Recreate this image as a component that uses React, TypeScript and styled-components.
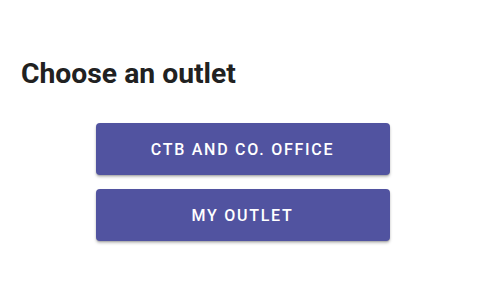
import React from 'react';
import styled, { createGlobalStyle } from 'styled-components';

const GlobalStyle = createGlobalStyle`
  html, body {
    margin: 0;
    padding: 0;
    background: #ffffff;
    font-family: Roboto, "Liberation Sans", sans-serif;
  }
`;

const Page = styled.div`
  width: 485px;
  height: 299px;
  box-sizing: border-box;
  padding: 57px 21px 0;
  display: flex;
  flex-direction: column;
`;

const Title = styled.h2`
  margin: 0;
  font-size: 28.3px;
  line-height: 33px;
  font-weight: 700;
  color: #212121;
`;

const OutletList = styled.div`
  margin-top: 33px;
  display: flex;
  flex-direction: column;
  align-items: center;
  gap: 14px;
`;

const OutletButton = styled.button`
  width: 294px;
  height: 52px;
  border: none;
  border-radius: 4px;
  background: #5153a0;
  color: #ffffff;
  font-family: Roboto, "Liberation Sans", sans-serif;
  font-size: 16px;
  font-weight: 500;
  letter-spacing: 1.75px;
  text-transform: uppercase;
  box-shadow: 0 2px 3px rgba(0, 0, 0, 0.25), 0 1px 1px rgba(0, 0, 0, 0.12);
  cursor: pointer;
`;

const outlets = ['CTB and Co. Office', 'My Outlet'];

const App: React.FC = () => {
  return (
    <>
      <GlobalStyle />
      <Page>
        <Title>Choose an outlet</Title>
        <OutletList>
          {outlets.map((name) => (
            <OutletButton key={name}>{name}</OutletButton>
          ))}
        </OutletList>
      </Page>
    </>
  );
};

export default App;
